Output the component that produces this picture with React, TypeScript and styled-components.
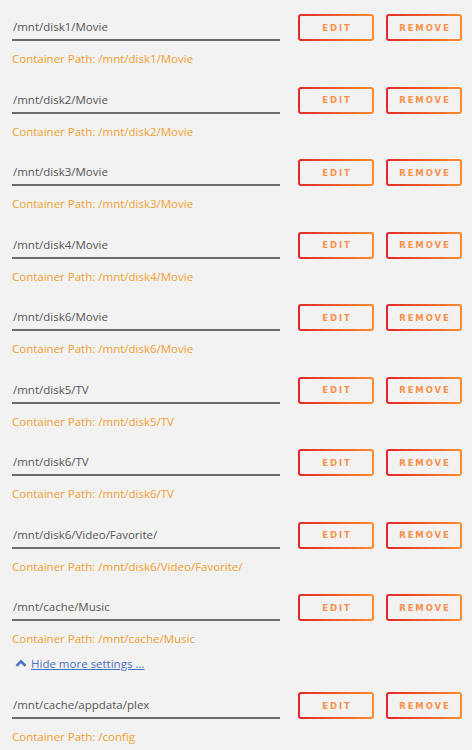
import React from 'react';
import styled, { createGlobalStyle } from 'styled-components';

const GlobalStyle = createGlobalStyle`
  html, body {
    margin: 0;
    padding: 0;
    background: #f2f2f2;
  }
  body {
    font-family: "Open Sans", "DejaVu Sans", sans-serif;
  }
`;

// page wrapper
const Page = styled.div`
  width: 472px;
  min-height: 750px;
  box-sizing: border-box;
  padding: 14px 10px 0 12px;
  background: #f2f2f2;
`;

const MountBlock = styled.div<{ $last?: boolean }>`
  display: flex;
  flex-direction: column;
  margin-bottom: ${(p) => (p.$last ? '8px' : '19.5px')};
`;

const MountRow = styled.div`
  display: flex;
  align-items: stretch;
  height: 27px;
`;

const HostPath = styled.div`
  flex: 0 0 268px;
  box-sizing: border-box;
  border-bottom: 2px solid #6b6b6b;
  padding: 1px 0 0 1px;
  font-size: 11.5px;
  line-height: 24px;
  color: #555;
  white-space: nowrap;
  overflow: hidden;
`;

const Actions = styled.div`
  display: flex;
  gap: 12px;
  margin-left: 18px;
`;

const GradientButton = styled.button`
  width: 76px;
  height: 27px;
  box-sizing: border-box;
  border: 2px solid transparent;
  border-radius: 3px;
  background:
    linear-gradient(#f2f2f2, #f2f2f2) padding-box,
    linear-gradient(90deg, #e22828, #ff8c2f) border-box;
  padding: 0;
  font-family: "DejaVu Sans", sans-serif;
  font-size: 8.5px;
  font-weight: bold;
  letter-spacing: 1.9px;
  text-indent: 2px;
  color: #f9904a;
  cursor: pointer;
`;

const ContainerPath = styled.div`
  margin-top: 10px;
  font-size: 11.5px;
  line-height: 16px;
  color: #f0a030;
`;

const ToggleLink = styled.a`
  display: flex;
  align-items: center;
  gap: 3px;
  margin: 0 0 21px 2px;
  height: 16px;
  font-size: 11.5px;
  color: #4b6fc0;
  cursor: pointer;
`;

const LinkText = styled.span`
  text-decoration: underline;
`;

const mounts = [
  { host: '/mnt/disk1/Movie', container: '/mnt/disk1/Movie' },
  { host: '/mnt/disk2/Movie', container: '/mnt/disk2/Movie' },
  { host: '/mnt/disk3/Movie', container: '/mnt/disk3/Movie' },
  { host: '/mnt/disk4/Movie', container: '/mnt/disk4/Movie' },
  { host: '/mnt/disk6/Movie', container: '/mnt/disk6/Movie' },
  { host: '/mnt/disk5/TV', container: '/mnt/disk5/TV' },
  { host: '/mnt/disk6/TV', container: '/mnt/disk6/TV' },
  { host: '/mnt/disk6/Video/Favorite/', container: '/mnt/disk6/Video/Favorite/' },
  { host: '/mnt/cache/Music', container: '/mnt/cache/Music' },
];

const Mount = ({ host, container, last }: { host: string; container: string; last?: boolean }) => (
  <MountBlock $last={last}>
    <MountRow>
      <HostPath>{host}</HostPath>
      <Actions>
        <GradientButton>EDIT</GradientButton>
        <GradientButton>REMOVE</GradientButton>
      </Actions>
    </MountRow>
    <ContainerPath>Container Path: {container}</ContainerPath>
  </MountBlock>
);

const ChevronUp = () => (
  <svg width="14" height="10" viewBox="0 0 14 10">
    <path d="M2.5 7.8 L7 3.3 L11.5 7.8" fill="none" stroke="#4b6fc0" strokeWidth="2.6" />
  </svg>
);

export default function App() {
  return (
    <>
      <GlobalStyle />
      <Page>
        {mounts.map((m, i) => (
          <Mount key={m.host} host={m.host} container={m.container} last={i === mounts.length - 1} />
        ))}
        <ToggleLink>
          <ChevronUp />
          <LinkText>Hide more settings ...</LinkText>
        </ToggleLink>
        <Mount host="/mnt/cache/appdata/plex" container="/config" />
      </Page>
    </>
  );
}
